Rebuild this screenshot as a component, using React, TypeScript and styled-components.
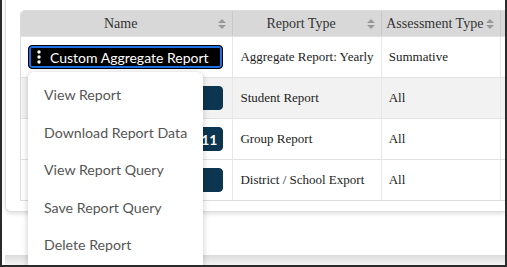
import styled, { createGlobalStyle } from "styled-components";

const GlobalStyle = createGlobalStyle`
  body {
    margin: 0;
    background: #fff;
  }
`;

const Frame = styled.div`
  width: 507px;
  height: 267px;
  box-sizing: border-box;
  border-left: 2px solid #2a2a2a;
  border-right: 2px solid #2a2a2a;
  border-bottom: 2px solid #2a2a2a;
  overflow: hidden;
  background: #fff;
  padding-left: 3px;
  display: flex;
  flex-direction: column;
`;

const Card = styled.div`
  margin-top: -6px;
  padding: 15px 0 10px 14px;
  border: 1px solid #dedede;
  border-right: none;
  border-radius: 0 0 0 6px;
  box-shadow: 0 2px 4px rgba(0, 0, 0, 0.12);
  background: #fff;
`;

const Table = styled.table`
  border-collapse: separate;
  border-spacing: 0;
  table-layout: fixed;
  width: 520px;
  border: 1px solid #dcdcdc;
  border-right: none;
  border-radius: 5px 0 0 0;
  font-family: "Liberation Serif", "Times New Roman", serif;
  color: #222;
`;

const HeadCell = styled.th<{ $w: number }>`
  width: ${(p) => p.$w}px;
  height: 25px;
  padding: 0 4px;
  box-sizing: border-box;
  background: #d8d8d8;
  border-left: 1px solid #c9c9c9;
  font-weight: 400;
  font-size: 14px;
  color: #333;
  text-align: center;
  white-space: nowrap;
  &:first-child {
    border-left: none;
    border-radius: 4px 0 0 0;
  }
`;

const HeadInner = styled.div`
  display: flex;
  align-items: center;
  justify-content: center;
  position: relative;
  padding-right: 12px;
`;

const SortIcon = styled.svg`
  position: absolute;
  right: 2px;
  top: 50%;
  margin-top: -5px;
`;

const Row = styled.tr<{ $shade?: boolean }>`
  background: ${(p) => (p.$shade ? "#f2f2f2" : "#fff")};
`;

const Cell = styled.td`
  height: 41px;
  padding: 0 7px;
  box-sizing: border-box;
  border-top: 1px solid #e2e2e2;
  border-left: 1px solid #e8e8e8;
  font-size: 13px;
  white-space: nowrap;
  overflow: hidden;
  &:first-child {
    border-left: none;
  }
`;

const NameCell = styled(Cell)`
  padding: 0 9px 0 7px;
  position: relative;
  overflow: visible;
`;

const ReportButton = styled.button<{ $active?: boolean }>`
  display: flex;
  align-items: center;
  gap: 9px;
  width: 100%;
  height: 24px;
  padding: 0 ${(p) => (p.$active ? "8px" : "5px")};
  box-sizing: border-box;
  border-radius: 4px;
  border: 1px solid ${(p) => (p.$active ? "#000" : "#0c3550")};
  background: ${(p) => (p.$active ? "#000" : "#0c3550")};
  box-shadow: ${(p) => (p.$active ? "inset 0 0 0 2px #1f6fe5" : "none")};
  color: #fff;
  font-family: Lato, "Noto Sans", sans-serif;
  font-size: 14px;
  font-weight: ${(p) => (p.$active ? 400 : 700)};
  white-space: nowrap;
  overflow: hidden;
  justify-content: ${(p) => (p.$active ? "flex-start" : "flex-end")};
  svg {
    flex-shrink: 0;
  }
`;

const Menu = styled.div`
  position: absolute;
  left: 7px;
  top: 35px;
  width: 175px;
  z-index: 5;
  padding: 4px 0 20px;
  background: #fff;
  border-radius: 6px;
  box-shadow: 0 1px 6px rgba(0, 0, 0, 0.22);
`;

const MenuItem = styled.div`
  height: 37.5px;
  line-height: 37.5px;
  padding: 0 16px;
  font-family: Lato, "Noto Sans", sans-serif;
  font-size: 14.2px;
  color: #555;
  white-space: nowrap;
`;

const BottomBand = styled.div`
  margin-top: auto;
  height: 10px;
  background: linear-gradient(#dcdcdc, #f4f4f4);
`;

const Sort = () => (
  <SortIcon width="8" height="10" viewBox="0 0 8 10">
    <path d="M4 0 L8 4 L0 4 Z M4 10 L8 6 L0 6 Z" fill="#999" />
  </SortIcon>
);

const Kebab = () => (
  <svg width="4" height="14" viewBox="0 0 4 14">
    <circle cx="2" cy="2" r="1.7" fill="#fff" />
    <circle cx="2" cy="7" r="1.7" fill="#fff" />
    <circle cx="2" cy="12" r="1.7" fill="#fff" />
  </svg>
);

const rows = [
  { name: "Custom Aggregate Report", type: "Aggregate Report: Yearly", assess: "Summative" },
  { name: "Student Report", type: "Student Report", assess: "All" },
  { name: "Group Report 2010-11", type: "Group Report", assess: "All" },
  { name: "District Export", type: "District / School Export", assess: "All" },
];

const menuItems = [
  "View Report",
  "Download Report Data",
  "View Report Query",
  "Save Report Query",
  "Delete Report",
];

export default function App() {
  return (
    <>
      <GlobalStyle />
      <Frame>
        <Card>
          <Table>
            <thead>
              <tr>
                <HeadCell $w={211}>
                  <HeadInner>Name<Sort /></HeadInner>
                </HeadCell>
                <HeadCell $w={148}>
                  <HeadInner>Report Type<Sort /></HeadInner>
                </HeadCell>
                <HeadCell $w={119}>
                  <HeadInner>Assessment Type<Sort /></HeadInner>
                </HeadCell>
                <HeadCell $w={40}></HeadCell>
              </tr>
            </thead>
            <tbody>
              {rows.map((r, i) => (
                <Row key={r.name} $shade={i === 1}>
                  <NameCell>
                    {i === 0 ? (
                      <ReportButton $active>
                        <Kebab />
                        {r.name}
                      </ReportButton>
                    ) : (
                      <ReportButton>{i === 2 ? "11" : ""}</ReportButton>
                    )}
                    {i === 0 && (
                      <Menu>
                        {menuItems.map((m) => (
                          <MenuItem key={m}>{m}</MenuItem>
                        ))}
                      </Menu>
                    )}
                  </NameCell>
                  <Cell>{r.type}</Cell>
                  <Cell>{r.assess}</Cell>
                  <Cell></Cell>
                </Row>
              ))}
            </tbody>
          </Table>
        </Card>
        <BottomBand />
      </Frame>
    </>
  );
}
